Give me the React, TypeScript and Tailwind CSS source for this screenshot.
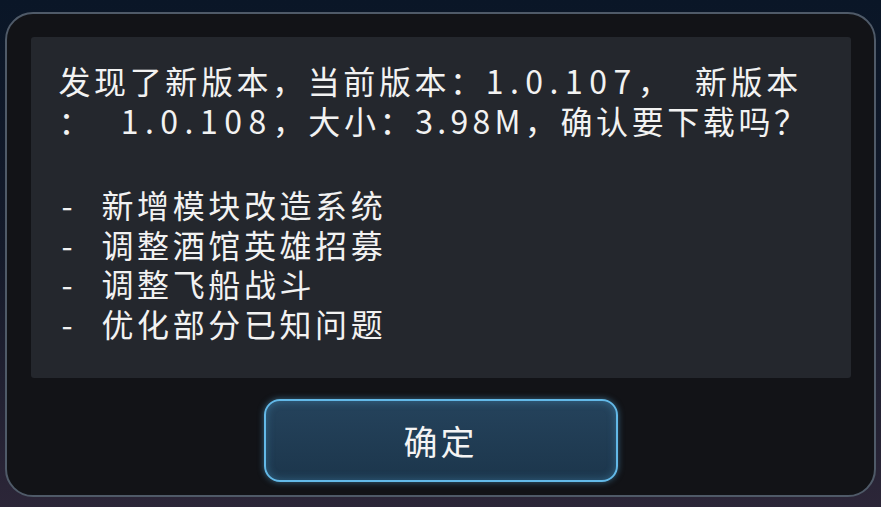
const cjk = "font-['Noto_Sans_CJK_SC','Noto_Sans',sans-serif]";

const notes = ["新增模块改造系统", "调整酒馆英雄招募", "调整飞船战斗", "优化部分已知问题"];

export default function App() {
  return (
    <div className="w-[881px] h-[507px] overflow-hidden bg-gradient-to-b from-[#0a1627] via-[#141a2a] to-[#2c2638] pt-[12px] pl-[5px]">
      <div className="w-[871px] h-[485px] rounded-[28px] border-2 border-[#4f5a68] bg-[#121317] pt-[23px] px-[24px] flex flex-col items-center">
        <div
          className={`w-[820px] h-[341px] rounded-[3px] bg-[#24272d] pl-[28px] pt-[24px] text-[32px] leading-[39.5px] tracking-[3.6px] text-[#f2f2f2] whitespace-pre ${cjk}`}
        >
          <div>
            发现了新版本，当前版本：<span className="tracking-[6.5px]">1.0.107</span>，  新版本
          </div>
          <div>
            ：<span className="ml-[5px]">  </span>
            <span className="tracking-[6.5px]">1.0.108</span>，大小：
            <span className="tracking-[4.3px]">3.98M</span>，确认要下载吗？
          </div>
          <div className="h-[45px]" />
          {notes.map((n) => (
            <div key={n} className="flex">
              <span className="w-[43px] pl-[3px]">-</span>
              <span>{n}</span>
            </div>
          ))}
        </div>
        <button
          className={`mt-[21px] w-[354px] h-[83px] rounded-[16px] border-2 border-[#63b9e8] bg-gradient-to-b from-[#25435c] to-[#1c364c] shadow-[0_0_6px_rgba(90,180,230,0.5),inset_0_0_8px_rgba(90,180,230,0.35)] text-[34px] tracking-[3px] text-[#f4f4f4] ${cjk}`}
        >
          确定
        </button>
      </div>
    </div>
  );
}
